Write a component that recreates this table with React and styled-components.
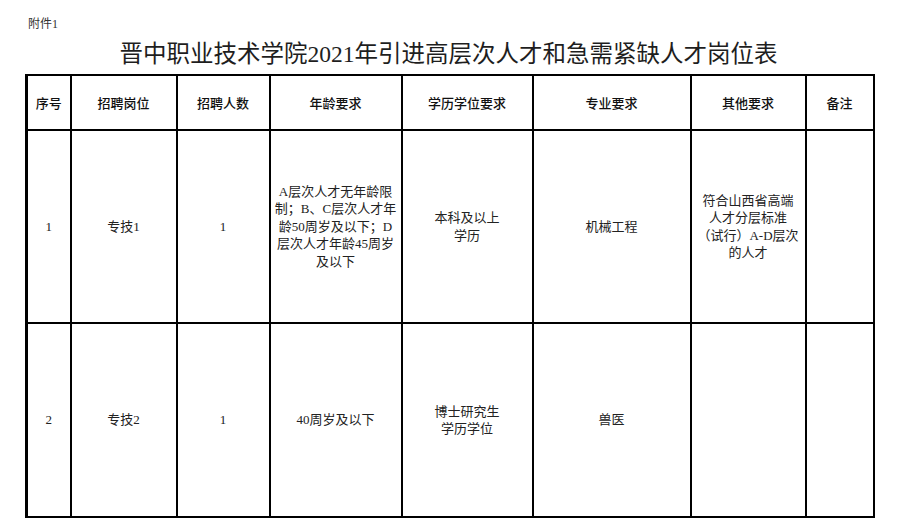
import React from "react";
import styled, { createGlobalStyle } from "styled-components";

const GlobalStyle = createGlobalStyle`
  html, body {
    margin: 0;
    padding: 0;
    background: #fff;
  }
  body {
    font-family: "Liberation Serif", "Noto Sans CJK SC", serif;
    color: #1a1a1a;
  }
`;

const Page = styled.div`
  width: 900px;
  height: 529px;
  box-sizing: border-box;
  padding: 14px 0 0 25px;
  overflow: hidden;
`;

const Attachment = styled.div`
  font-size: 12px;
  line-height: 20px;
  height: 20px;
  padding-left: 3px;
  color: #333;
`;

const Title = styled.h1`
  margin: 5px 0 0;
  width: 847px;
  text-align: center;
  font-family: "Liberation Serif", "Noto Sans CJK SC", serif;
  font-weight: 400;
  font-size: 23.5px;
  line-height: 30px;
  height: 35px;
  color: #1e1e1e;
`;

const Table = styled.table`
  border-collapse: collapse;
  table-layout: fixed;
  width: 847px;
`;

const Cell = styled.td`
  border: 2px solid #000;
  border-left-width: ${(p) => (p.$thinLeft ? "1px" : p.$edge ? "3px" : "2px")};
  padding: 0;
  text-align: center;
  vertical-align: middle;
  font-size: 13px;
  line-height: 17.5px;
  color: #222;
`;

const HeadCell = styled(Cell).attrs({ as: "th" })`
  font-family: "Noto Sans CJK SC", sans-serif;
  font-weight: 500;
  font-size: 13px;
  color: #111;
`;

const HeadRow = styled.tr`
  height: 55px;
`;

const BodyRow = styled.tr`
  height: ${(p) => p.$h}px;
`;

const Lines = styled.div`
  display: inline-block;
  text-align: center;
`;

const cols = [44, 106, 93, 132, 131, 158, 115, 68];

const headers = [
  "序号",
  "招聘岗位",
  "招聘人数",
  "年龄要求",
  "学历学位要求",
  "专业要求",
  "其他要求",
  "备注",
];

const rows = [
  {
    h: 193,
    cells: [
      ["1"],
      ["专技1"],
      ["1"],
      [
        "A层次人才无年龄限",
        "制；B、C层次人才年",
        "龄50周岁及以下；D",
        "层次人才年龄45周岁",
        "及以下",
      ],
      ["本科及以上", "学历"],
      ["机械工程"],
      ["符合山西省高端", "人才分层标准", "（试行）A-D层次", "的人才"],
      [],
    ],
  },
  {
    h: 194,
    cells: [
      ["2"],
      ["专技2"],
      ["1"],
      ["40周岁及以下"],
      ["博士研究生", "学历学位"],
      ["兽医"],
      [],
      [],
    ],
  },
];

const Text = ({ lines }) => (
  <Lines>
    {lines.map((l, i) => (
      <div key={i}>{l}</div>
    ))}
  </Lines>
);

const App = () => (
  <>
    <GlobalStyle />
    <Page>
      <Attachment>附件1</Attachment>
      <Title>晋中职业技术学院2021年引进高层次人才和急需紧缺人才岗位表</Title>
      <Table>
        <colgroup>
          {cols.map((w, i) => (
            <col key={i} style={{ width: w }} />
          ))}
        </colgroup>
        <thead>
          <HeadRow>
            {headers.map((h, i) => (
              <HeadCell key={h} $thinLeft={i === 5} $edge={i === 0}>
                {h}
              </HeadCell>
            ))}
          </HeadRow>
        </thead>
        <tbody>
          {rows.map((r, ri) => (
            <BodyRow key={ri} $h={r.h}>
              {r.cells.map((c, i) => (
                <Cell key={i} $thinLeft={i === 5} $edge={i === 0}>
                  <Text lines={c} />
                </Cell>
              ))}
            </BodyRow>
          ))}
        </tbody>
      </Table>
    </Page>
  </>
);

export default App;
